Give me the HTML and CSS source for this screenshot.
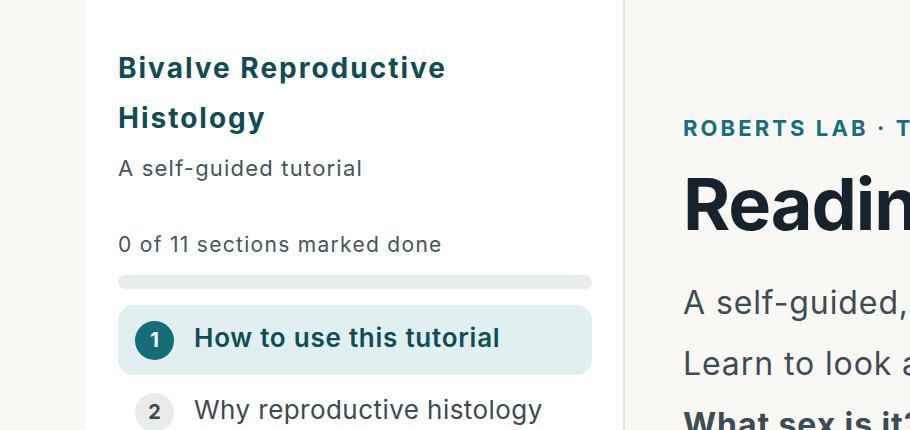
FILE: index.html
```html
<html>
<head>
<title>Bivalve Reproductive Histology</title>
<link rel="stylesheet" href="styles.css">
</head>
<body>

<div id="layout">
	<div id="sidebar">
		<div class="course-title">Bivalve Reproductive Histology</div>
		<div class="course-sub">A self-guided tutorial</div>

		<div class="progress-label">0 of 11 sections marked done</div>
		<div class="progress-track"><div class="progress-fill" style="width: 0%"></div></div>

		<div class="nav">
			<div class="nav-item active"><span class="num">1</span><span class="label">How to use this tutorial</span></div>
			<div class="nav-item"><span class="num">2</span><span class="label">Why reproductive histology</span></div>
			<div class="nav-item"><span class="num">3</span><span class="label">Gonad anatomy basics</span></div>
		</div>
	</div>

	<div id="main">
		<div class="eyebrow">Roberts Lab &middot; Tutorial</div>
		<h1 class="headline">Reading bivalve gonads</h1>
		<p class="lede">A self-guided, image-based tour of bivalve gonad sections.</p>
		<p class="lede">Learn to look at a slide and name what you see.</p>
		<p class="lede strong">What sex is it? What stage is it in?</p>
	</div>
</div>

</body>
</html>
```

FILE: styles.css
```css
html, body {
	background-color: #f9f8f5;
	padding: 0px;
	margin: 0px;
	width: 100%;
	height: 100%;
	overflow: hidden;
	font-family: Inter, "Noto Sans", sans-serif;
}
#layout {
	display: flex;
	padding-left: 86px;
	height: 100%;
}
#sidebar {
	flex: 0 0 474px;
	background-color: #ffffff;
	border-right: 2px solid #e2e1dd;
	padding: 43px 31px 0 32px;
}
.course-title {
	font-size: 28px;
	line-height: 50px;
	font-weight: 700;
	letter-spacing: 2px;
	color: #0e4d55;
	width: 380px;
}
.course-sub {
	margin-top: 8px;
	font-size: 22px;
	line-height: 35px;
	letter-spacing: 1.2px;
	color: #46545c;
}
.progress-label {
	margin-top: 43px;
	font-size: 21px;
	line-height: 32px;
	letter-spacing: 1.3px;
	color: #46545c;
}
.progress-track {
	margin-top: 14px;
	height: 14px;
	border-radius: 7px;
	background-color: #e8eceb;
	overflow: hidden;
}
.progress-fill {
	height: 100%;
	background-color: #136e78;
}
.nav {
	margin-top: 16px;
	display: flex;
	flex-direction: column;
	gap: 2px;
}
.nav-item {
	display: flex;
	align-items: center;
	gap: 20px;
	height: 70px;
	padding: 0 17px;
	border-radius: 16px;
	font-size: 26px;
	letter-spacing: 0.45px;
	color: #3d4a52;
}
.nav-item .label {
	padding-bottom: 6px;
}
.nav-item .num {
	flex: 0 0 39px;
	height: 39px;
	border-radius: 50%;
	background-color: #e9ecea;
	color: #3b4a53;
	font-size: 20px;
	font-weight: 700;
	letter-spacing: 0;
	display: flex;
	align-items: center;
	justify-content: center;
}
.nav-item.active {
	background-color: #e1eff0;
	color: #0f4e56;
	font-weight: 600;
	letter-spacing: 0.75px;
}
.nav-item.active .num {
	background-color: #136e78;
	color: #ffffff;
}
#main {
	flex: 0 0 auto;
	width: 1000px;
	padding: 114px 0 0 58px;
}
.eyebrow {
	font-size: 22px;
	line-height: 29px;
	font-weight: 700;
	letter-spacing: 3.1px;
	text-transform: uppercase;
	color: #14717b;
}
.headline {
	margin: 21px 0 0 0;
	font-size: 72px;
	line-height: 79px;
	font-weight: 700;
	letter-spacing: -0.015em;
	color: #16232c;
	white-space: nowrap;
}
.lede {
	margin: 0;
	font-size: 32px;
	line-height: 61px;
	letter-spacing: 0.9px;
	color: #3e4c55;
	white-space: nowrap;
}
.lede:first-of-type {
	margin-top: 29px;
}
.strong {
	font-weight: 700;
}
```
